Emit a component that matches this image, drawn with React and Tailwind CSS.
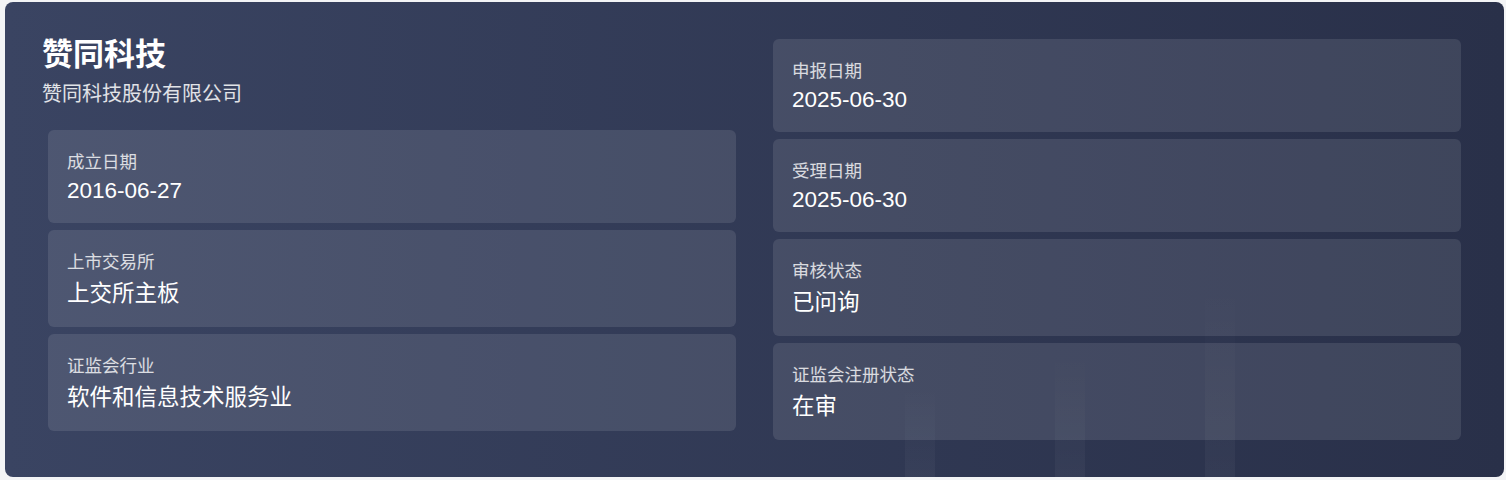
import React from 'react';

const leftItems = [
  { label: '成立日期', value: '2016-06-27', cjk: false },
  { label: '上市交易所', value: '上交所主板', cjk: true },
  { label: '证监会行业', value: '软件和信息技术服务业', cjk: true },
];

const rightItems = [
  { label: '申报日期', value: '2025-06-30', cjk: false },
  { label: '受理日期', value: '2025-06-30', cjk: false },
  { label: '审核状态', value: '已问询', cjk: true },
  { label: '证监会注册状态', value: '在审', cjk: true },
];

const InfoCard = ({ label, value, cjk }) => (
  <div className={`mx-[6px] rounded-[6px] bg-white/10 pl-[19px] pr-4 pt-5 ${cjk ? 'pb-4' : 'pb-[17px]'}`}>
    <div className="text-[17.5px] leading-[24px] text-white/80">{label}</div>
    <div className={`text-[22.5px] text-white ${cjk ? 'mt-[3px] leading-[34px]' : 'mt-[2px] leading-[30px]'}`}>
      {value}
    </div>
  </div>
);

export default function App() {
  return (
    <div
      className="min-h-[480px] bg-[#f3f4f6] pl-[5px] pt-[2px]"
      style={{ fontFamily: '"Liberation Sans", "Noto Sans CJK SC", sans-serif' }}
    >
      <div className="relative h-[475px] w-[1499px] overflow-hidden rounded-[8px] bg-linear-to-r from-[#3a4462] to-[#293049]">
        {/* faint decorative bars */}
        <div className="absolute bottom-0 left-[900px] h-[90px] w-[30px] rounded-t-[6px] bg-linear-to-b from-white/0 to-white/[0.04]" />
        <div className="absolute bottom-0 left-[1050px] h-[122px] w-[30px] rounded-t-[6px] bg-linear-to-b from-white/0 to-white/[0.04]" />
        <div className="absolute bottom-0 left-[1200px] h-[190px] w-[30px] rounded-t-[6px] bg-linear-to-b from-white/0 to-white/[0.04]" />

        <div className="relative grid grid-cols-2 gap-[25px] px-[37px] pt-[37px]">
          <div>
            <h1 className="text-[31px] font-bold leading-[32px] text-white">赞同科技</h1>
            <div className="mt-[9px] text-[20px] leading-[28px] text-white/85">赞同科技股份有限公司</div>
            <div className="mt-[22px] flex flex-col gap-[7px]">
              {leftItems.map((item) => (
                <InfoCard key={item.label} {...item} />
              ))}
            </div>
          </div>
          <div className="flex flex-col gap-[7px]">
            {rightItems.map((item) => (
              <InfoCard key={item.label} {...item} />
            ))}
          </div>
        </div>
      </div>
    </div>
  );
}
